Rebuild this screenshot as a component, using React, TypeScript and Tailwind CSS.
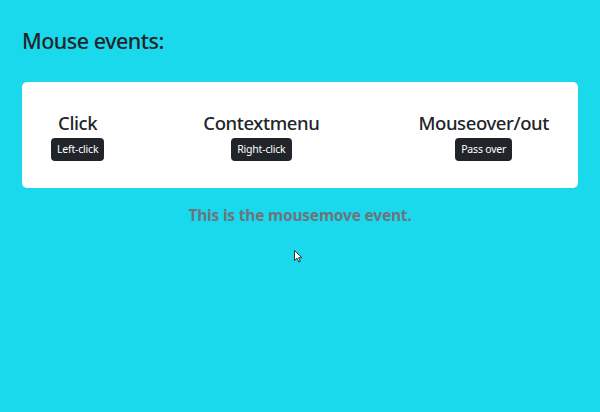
import React from "react";

function Cursor() {
  return (
    <svg width="9" height="13" viewBox="0 0 9 13" className="absolute left-[294px] top-[250px]">
      <path d="M0.5 0.5 L0.5 10.5 L3 8.2 L4.8 12 L6.3 11.3 L4.6 7.7 L8 7.7 Z" fill="#fff" stroke="#333" strokeWidth="1" strokeLinejoin="round" />
    </svg>
  );
}

function Item({ title, label }: { title: string; label: string }) {
  return (
    <div className="flex flex-col items-center">
      <div className="text-[18.5px] leading-[22px] font-medium tracking-[-0.4px] text-[#212529]">{title}</div>
      <button className="mt-[4px] h-[23px] px-[6px] rounded-[4px] bg-[#212529] text-white text-[10.5px] tracking-[-0.2px] leading-[23px]">
        {label}
      </button>
    </div>
  );
}

export default function App() {
  return (
    <div
      className="relative w-[600px] h-[412px] bg-[#1bd9ec] overflow-hidden"
      style={{ fontFamily: '"Noto Sans", "Open Sans", sans-serif' }}
    >
      <div className="px-[22px] pt-[26px]">
        <h3 className="text-[21.5px] leading-[30px] font-medium tracking-[-0.5px] text-[#212529]">Mouse events:</h3>
        <div className="mt-[26px] h-[106px] bg-white rounded-[5px] flex items-center justify-between pl-[29px] pr-[29px] pt-[2px]">
          <Item title="Click" label="Left-click" />
          <Item title="Contextmenu" label="Right-click" />
          <Item title="Mouseover/out" label="Pass over" />
        </div>
        <p className="mt-[16px] text-center text-[15.5px] leading-[22px] font-bold tracking-[-0.2px] text-[#6c757d]">
          This is the mousemove event.
        </p>
      </div>
      <Cursor />
    </div>
  );
}
